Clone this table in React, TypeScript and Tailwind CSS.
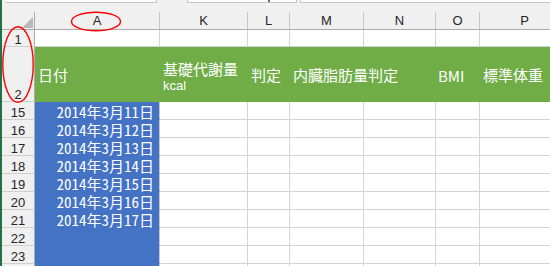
import React from "react";

const cols = [
  { key: "A", w: "w-[125px]" },
  { key: "K", w: "w-[88px]" },
  { key: "L", w: "w-[42px]" },
  { key: "M", w: "w-[74px]" },
  { key: "N", w: "w-[72px]" },
  { key: "O", w: "w-[44px]" },
  { key: "P", w: "w-[90px]" },
];

const dates: Record<number, string> = {
  15: "2014年3月11日",
  16: "2014年3月12日",
  17: "2014年3月13日",
  18: "2014年3月14日",
  19: "2014年3月15日",
  20: "2014年3月16日",
  21: "2014年3月17日",
};

const jp = "font-['Noto_Sans_CJK_JP',sans-serif]";
const ui = "font-['Liberation_Sans',Arial,sans-serif]";

function RowHead({ n, h }: { n?: number; h: string }) {
  return (
    <div
      className={`${h} w-[33px] shrink-0 flex items-end justify-center border-r border-b border-r-[#ababab] border-b-[#cfcfcf] bg-[#f0f0f0] text-[13px] leading-[13px] text-[#262626] ${ui}`}
    >
      {n ?? ""}
    </div>
  );
}

function DataRow({ n, label = true }: { n: number; label?: boolean }) {
  const text = dates[n];
  return (
    <div className="flex h-[18px] shrink-0">
      <RowHead n={label ? n : undefined} h="h-[18px]" />
      {cols.map((c) =>
        c.key === "A" ? (
          <div
            key={c.key}
            className={`${c.w} shrink-0 h-[18px] bg-[#4472c4] border-r border-b border-r-[#c8c8c8] border-b-[#4472c4] flex items-end justify-end pr-[5px] text-white text-[15px] leading-[15px] [font-feature-settings:'hwid'] ${jp}`}
          >
            {text ?? ""}
          </div>
        ) : (
          <div
            key={c.key}
            className={`${c.w} shrink-0 h-[18px] bg-white border-r border-b border-[#d4d4d4]`}
          />
        )
      )}
    </div>
  );
}

export default function App() {
  const rows = [15, 16, 17, 18, 19, 20, 21, 22, 23];
  return (
    <div className="relative w-[550px] h-[266px] overflow-hidden bg-[#f0f0f0] flex">
      {/* window frame edge */}
      <div className="w-[2px] shrink-0 bg-[#217346]" />

      <div className="flex flex-col flex-1 min-w-0">
        {/* formula bar bottom edge */}
        <div className="h-[12px] shrink-0 flex items-start">
          <div className="w-[4px]" />
          <div className="w-[151px] h-[3px] bg-white border-b border-r border-[#c6c6c6]" />
          <div className="w-[30px]" />
          <div className="relative w-[110px] h-[3px] bg-white border-b border-x border-[#c6c6c6]">
            <div className="absolute left-[80px] top-0 w-[2px] h-[2px] bg-[#6b6b6b]" />
          </div>
          <div className="w-[3px]" />
          <div className="flex-1 h-[3px] bg-white border-b border-l border-[#c6c6c6]" />
        </div>

        {/* column letters */}
        <div className="flex h-[18px] shrink-0 border-b border-[#ababab] bg-[#f0f0f0]">
          <div className="relative w-[33px] shrink-0 border-r border-[#ababab]">
            <svg className="absolute left-[20px] top-[5px]" width="11" height="11" viewBox="0 0 11 11">
              <polygon points="11,0 11,11 0,11" fill="#b9b9b9" />
            </svg>
          </div>
          {cols.map((c) => (
            <div
              key={c.key}
              className={`${c.w} shrink-0 border-r border-[#c6c6c6] flex items-center justify-center text-[13px] text-[#262626] ${ui}`}
            >
              {c.key}
            </div>
          ))}
        </div>

        {/* row 1 */}
        <div className="flex h-[17px] shrink-0">
          <RowHead n={1} h="h-[17px]" />
          {cols.map((c) => (
            <div key={c.key} className={`${c.w} shrink-0 h-[17px] bg-white border-r border-b border-[#d4d4d4]`} />
          ))}
        </div>

        {/* row 2: green header band */}
        <div className="flex h-[55px] shrink-0">
          <RowHead n={2} h="h-[55px]" />
          <div className={`flex flex-1 bg-[#70ad47] text-white text-[15px] whitespace-nowrap ${jp}`}>
            <div className="w-[125px] shrink-0 flex items-center pl-[3px] pt-[2px]">日付</div>
            <div className="w-[88px] shrink-0 flex flex-col justify-center pl-[3px] pt-[4px]">
              <span className="leading-[17px]">基礎代謝量</span>
              <span className={`leading-[17px] text-[13px] ${ui}`}>kcal</span>
            </div>
            <div className="w-[42px] shrink-0 flex items-center pl-[3px] pt-[2px]">判定</div>
            <div className="w-[74px] shrink-0 flex items-center pl-[3px] pt-[2px] overflow-visible">
              内臓脂肪量判定
            </div>
            <div className="w-[72px] shrink-0" />
            <div className="w-[44px] shrink-0 flex items-center pl-[2px] pt-[3px]">BMI</div>
            <div className="w-[90px] shrink-0 flex items-center pl-[3px] pt-[2px]">標準体重</div>
          </div>
        </div>

        {rows.map((n) => (
          <DataRow key={n} n={n} />
        ))}
        {/* next row, only its top edge shows */}
        <DataRow n={24} label={false} />
      </div>

      {/* red ellipse marks */}
      <svg className="absolute left-0 top-0 pointer-events-none" width="550" height="266">
        <ellipse cx="96" cy="21.5" rx="24.5" ry="9.3" fill="none" stroke="#ff0000" strokeWidth="1.4" />
        <ellipse cx="18" cy="64.5" rx="15.2" ry="37.8" fill="none" stroke="#ff0000" strokeWidth="1.4" />
      </svg>
    </div>
  );
}
